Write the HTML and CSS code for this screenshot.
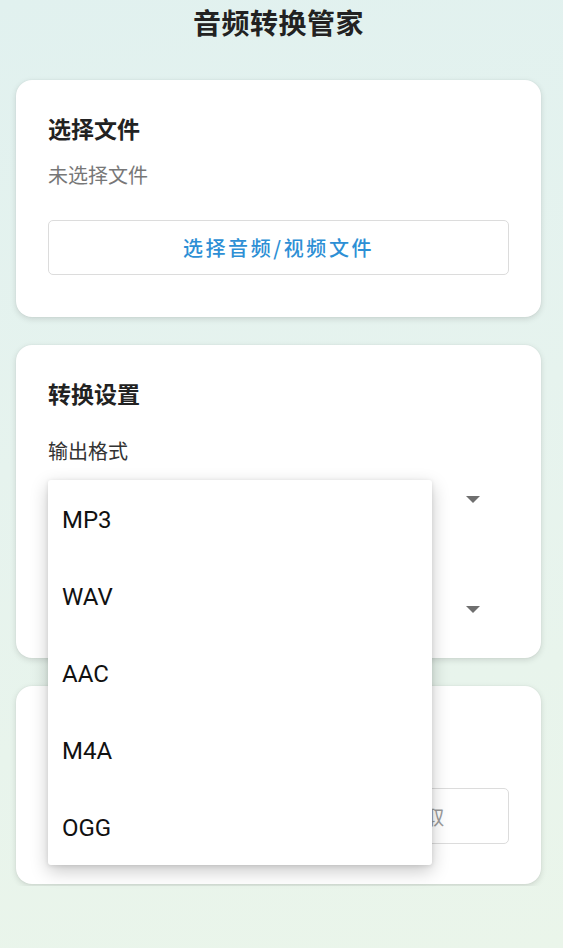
FILE: index.html
```html
<!DOCTYPE html>
<html lang="zh-CN">
<head>
<meta charset="utf-8">
<title>音频转换管家</title>
<link rel="stylesheet" href="styles.css">
</head>
<body>
<div class="page">
  <h1 class="app-title">音频转换管家</h1>

  <section class="card">
    <h2 class="card-title">选择文件</h2>
    <p class="file-status">未选择文件</p>
    <button class="btn btn-primary" type="button">选择音频/视频文件</button>
  </section>

  <section class="card card-settings">
    <h2 class="card-title">转换设置</h2>
    <div class="field">
      <label class="field-label">输出格式</label>
      <div class="select"><span class="select-value"></span><span class="select-arrow"></span></div>
    </div>
    <div class="field field-hidden">
      <div class="select"><span class="select-value"></span><span class="select-arrow"></span></div>
    </div>
  </section>

  <section class="card card-last">
    <div class="card-spacer"></div>
    <div class="btn-row">
      <button class="btn btn-disabled btn-left" type="button"></button>
      <button class="btn btn-disabled" type="button">提取</button>
    </div>
  </section>
</div>

<ul class="menu">
  <li class="menu-item">MP3</li>
  <li class="menu-item">WAV</li>
  <li class="menu-item">AAC</li>
  <li class="menu-item">M4A</li>
  <li class="menu-item">OGG</li>
</ul>
</body>
</html>
```

FILE: styles.css
```css
* { box-sizing: border-box; }

html, body {
  margin: 0;
  padding: 0;
}

body {
  width: 563px;
  height: 948px;
  overflow: hidden;
  position: relative;
  font-family: "Noto Sans CJK SC", "Noto Sans", sans-serif;
  background: linear-gradient(170deg, #e1f1ef 0%, #e6f3ee 45%, #eaf5ea 100%);
  color: #222;
}

.page {
  padding: 0 22px 2px 16px;
  overflow: hidden;
}

.app-title {
  margin: 0;
  height: 44px;
  line-height: 44px;
  text-align: center;
  font-size: 28px;
  font-weight: 700;
  color: #222;
  letter-spacing: 0.5px;
}

.card {
  background: #fff;
  border-radius: 16px;
  box-shadow: 0 2px 6px rgba(0, 0, 0, 0.13), 0 0 2px rgba(0, 0, 0, 0.06);
  padding: 32px 32px 42px;
  margin-top: 36px;
}

.card + .card {
  margin-top: 28px;
}

.card-title {
  margin: 0;
  font-size: 23px;
  line-height: 33px;
  font-weight: 700;
  color: #222;
}

.file-status {
  margin: 15px 0 0;
  font-size: 20px;
  line-height: 30px;
  color: #777;
}

.btn {
  display: block;
  width: 100%;
  height: 55px;
  margin-top: 30px;
  background: #fff;
  border: 1px solid #dcdcdc;
  border-radius: 5px;
  font-family: inherit;
  font-size: 20px;
  letter-spacing: 2.6px;
}

.btn-primary {
  color: #2d8fd5;
  font-weight: 500;
}

.btn-disabled {
  color: #9a9a9a;
  margin-top: 0;
}

.field {
  margin-top: 26px;
}

.field-hidden {
  margin-top: 20px;
  padding-top: 32px;
}

.field-label {
  display: block;
  font-size: 20px;
  line-height: 30px;
  color: #333;
}

.select {
  height: 50px;
  margin-top: 8px;
  display: flex;
  align-items: center;
  justify-content: space-between;
  padding: 0 29px 0 14px;
}

.select-arrow {
  width: 0;
  height: 0;
  border-left: 7px solid transparent;
  border-right: 7px solid transparent;
  border-top: 7px solid #6f6f6f;
}

.card-settings {
  padding-bottom: 24px;
}

.card-last {
  padding-bottom: 40px;
}

.card-spacer {
  height: 70px;
}

.btn-row {
  display: flex;
  gap: 16px;
}

.btn-row .btn {
  height: 56px;
  padding: 0 0 0 74px;
  text-align: center;
}

.btn-row .btn-left {
  padding: 0;
}

.menu {
  position: absolute;
  left: 48px;
  top: 480px;
  width: 384px;
  margin: 0;
  padding: 0;
  list-style: none;
  background: #fff;
  border-radius: 3px;
  box-shadow: 0 6px 18px rgba(0, 0, 0, 0.22), 0 1px 4px rgba(0, 0, 0, 0.1);
}

.menu-item {
  height: 77px;
  line-height: 80px;
  padding-left: 14px;
  font-family: Roboto, "Noto Sans", sans-serif;
  font-size: 24px;
  color: #111;
}
```
